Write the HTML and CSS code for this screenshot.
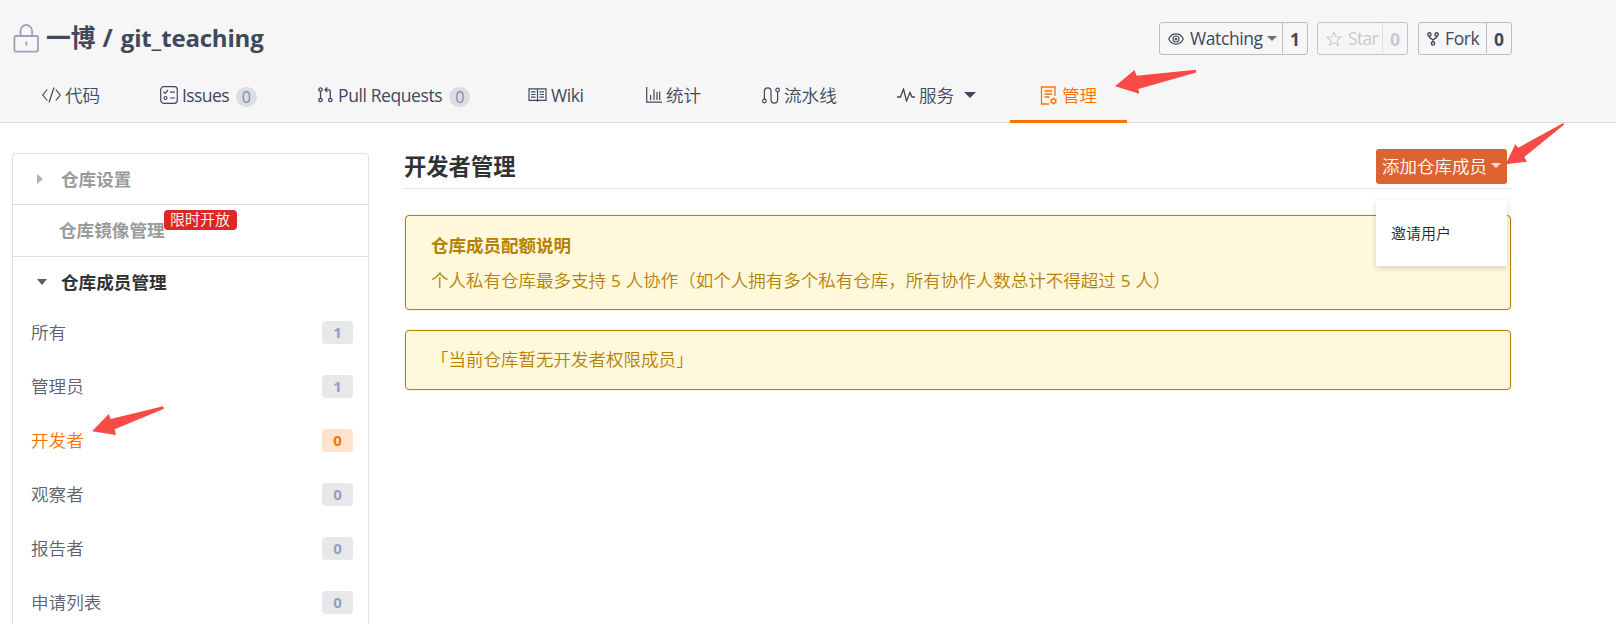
FILE: index.html
```html
<!DOCTYPE html>
<html lang="zh-CN">
<head>
<meta charset="utf-8">
<title>一博 / git_teaching</title>
<link rel="stylesheet" href="styles.css">
</head>
<body>
<header class="header">
  <div class="title-row">
    <svg class="lock" width="27" height="30" viewBox="0 0 27 30" fill="none" stroke="#9ba3b6" stroke-width="1.8"><rect x="1.4" y="13" width="23.6" height="15.6" rx="1.5"/><path d="M7.5 13V8a5.8 6 0 0 1 11.6 0v5M13.3 18.6v4"/></svg>
    <h1 class="repo"><span class="owner">一博</span><span class="slash">/</span><span class="name">git_teaching</span></h1>
    <div class="actions">
      <div class="action watch">
        <span class="act-main"><svg width="16" height="12" viewBox="0 0 16 12" fill="none" stroke="#40485b" stroke-width="1.1"><path d="M.7 6C4-.8 12-.8 15.3 6 12 12.8 4 12.8.7 6z"/><circle cx="8" cy="6" r="3"/><circle cx="8" cy="6" r=".8"/></svg><span class="act-label l-watch">Watching</span><i class="caret"></i></span><b class="act-count">1</b>
      </div>
      <div class="action star">
        <span class="act-main"><svg width="16" height="16" viewBox="0 0 16 16" fill="none" stroke="#c8cacd" stroke-width="1.1"><path d="M8 1.2l1.9 4.6 5 .4-3.8 3.2 1.2 4.9L8 11.600l-4.300 2.700 1.200-4.900L1.100 6.200l5-.4z"/></svg><span class="act-label l-star">Star</span></span><b class="act-count">0</b>
      </div>
      <div class="action fork">
        <span class="act-main"><svg width="12" height="14" viewBox="0 0 12 14" fill="none" stroke="#40485b" stroke-width="1.400"><circle cx="2.400" cy="2.400" r="1.600"/><circle cx="9.600" cy="2.400" r="1.600"/><circle cx="6" cy="11.400" r="1.600"/><path d="M2.400 4v1.400L6 8l3.600-2.600V4M6 8v1.800"/></svg><span class="act-label l-fork">Fork</span></span><b class="act-count">0</b>
      </div>
    </div>
  </div>
  <nav class="tabs">
    <a class="tab t-code"><svg width="19" height="16" viewBox="0 0 19 16" fill="none" stroke="#40485b" stroke-width="1.2"><path d="M5.200 2.500L.8 8l4.400 5.500M13.800 2.500L18.200 8l-4.400 5.500M12 .5L7 15.500"/></svg><span>代码</span></a>
    <a class="tab t-issues"><svg width="18" height="18" viewBox="0 0 18 18" fill="none" stroke="#40485b" stroke-width="1.2"><rect x=".7" y=".7" width="16.600" height="16.600" rx="3"/><path d="M3.500 5.800l1.700 1.500 2.800-3.300M10 6.200h4.800M10 12h4.800"/><circle cx="5.500" cy="12" r="1.500"/></svg><span class="latin l-issues">Issues</span><em class="pill">0</em></a>
    <a class="tab t-pr"><svg width="15" height="16" viewBox="0 0 15 16" fill="none" stroke="#40485b" stroke-width="1.300"><circle cx="2.500" cy="2.600" r="1.700"/><circle cx="2.500" cy="13" r="1.700"/><circle cx="12.300" cy="13" r="1.700"/><path d="M2.500 4.300v7M12.300 11.300V4.500q0-1.700-1.700-1.700H7M9.300.5L7 2.800l2.300 2.300"/></svg><span class="latin l-pr">Pull Requests</span><em class="pill">0</em></a>
    <a class="tab t-wiki"><svg width="19" height="14" viewBox="0 0 19 14" fill="none" stroke="#40485b" stroke-width="1.200"><path d="M1 .8h17v11.600H1zM9.500.8v13M3 3.800h4.500M3 6.500h4.500M3 9.200h4.500M11.500 3.800H16M11.500 6.500H16M11.500 9.200H16"/></svg><span class="latin l-wiki">Wiki</span></a>
    <a class="tab t-stat"><svg width="16" height="16" viewBox="0 0 16 16" fill="none" stroke="#40485b" stroke-width="1.200"><path d="M.7 0v15.200H16M4.600 13V8M8 13V2.500M11 13V5M13.700 13V4.500"/></svg><span>统计</span></a>
    <a class="tab t-pipe"><svg width="18" height="17" viewBox="0 0 18 17" fill="none" stroke="#40485b" stroke-width="1.200"><circle cx="2.400" cy="14" r="1.800"/><circle cx="15.600" cy="3" r="1.800"/><path d="M2.400 12.200V4.500a3.300 3.600 0 0 1 6.600 0v8a3.300 3.600 0 0 0 6.600 0V4.800"/></svg><span>流水线</span></a>
    <a class="tab t-serv"><svg width="18" height="14" viewBox="0 0 18 14" fill="none" stroke="#40485b" stroke-width="1.300"><path d="M0 9h3.500L6.500 1l3 12L13 4.500 15 9h3"/></svg><span>服务</span><i class="caret big"></i></a>
    <a class="tab t-admin active"><svg width="18" height="19" viewBox="0 0 18 19" fill="none" stroke="#fe7300" stroke-width="1.300"><path d="M9 18H1.500V1H15v9M4.500 5H12M4.500 8H12M4.500 11h5"/><circle cx="13.500" cy="15" r="2.200"/><path d="M13.500 11.500v1.300M13.500 17.200v1.300M10.500 13.200l1.100.7M15.400 16.100l1.100.7M10.500 16.800l1.100-.7M15.400 13.900l1.100-.7"/></svg><span>管理</span></a>
  </nav>
</header>

<div class="body">
  <aside class="sidebar">
    <div class="group g1"><i class="tri right"></i><b>仓库设置</b></div>
    <div class="group g2"><b>仓库镜像管理</b><span class="promo">限时开放</span></div>
    <div class="group g3"><i class="tri down"></i><b>仓库成员管理</b></div>
    <ul class="members">
      <li><span>所有</span><b>1</b></li>
      <li><span>管理员</span><b>1</b></li>
      <li class="current"><span>开发者</span><b>0</b></li>
      <li><span>观察者</span><b>0</b></li>
      <li><span>报告者</span><b>0</b></li>
      <li><span>申请列表</span><b>0</b></li>
    </ul>
  </aside>
  <main class="main">
    <div class="main-head">
      <h2>开发者管理</h2>
      <div class="add-wrap">
        <button class="add">添加仓库成员<i class="caret white"></i></button>
        <div class="menu">邀请用户</div>
      </div>
    </div>
    <section class="notice quota">
      <h3>仓库成员配额说明</h3>
      <p>个人私有仓库最多支持<span class="five">5</span>人协作（如个人拥有多个私有仓库，所有协作人数总计不得超过<span class="five">5</span>人）</p>
    </section>
    <section class="notice empty"><p>「当前仓库暂无开发者权限成员」</p></section>
  </main>
</div>

<svg class="arrows" width="1616" height="624" viewBox="0 0 1616 624" fill="#f84b46">
  <path d="M1115 86.300L1134.500 70l2.200 5.700 59-5.900.6 2.700L1138.300 89l1 4.700z"/>
  <path d="M1505.700 164.300l9.600-20 3 3.400 45-24.700.7 1.700-39.700 32.300 2.700 4.700z"/>
  <path d="M92 431.300L108.700 414l2 5 52.300-12.700 1 2.400-49.300 20.600 1.300 5.700z"/>
</svg>
</body>
</html>
```
FILE: styles.css
```css
* { box-sizing: border-box; }
body {
  margin: 0;
  height: 624px;
  overflow: hidden;
  background: #fff;
  color: #40485b;
  font: 350 17.600px/26px "Noto Sans CJK SC", sans-serif;
}
h1, h2, h3, p, ul { margin: 0; padding: 0; }
svg { flex: none; display: block; }

.header { height: 123px; background: #f6f6f6; border-bottom: 1px solid #dcddde; }
.title-row { display: flex; height: 67px; padding: 22px 104px 0 13px; align-items: flex-start; }
.lock { margin: 1px 0 0 0; }
.repo { display: flex; align-items: baseline; margin: -2px 0 0 6px; line-height: 32px; font-size: 24.800px; white-space: nowrap; }
.slash, .name { font-family: "Open Sans", sans-serif; }
.slash { margin: 0 8px 0 7px; }
.name { font-size: 24px; letter-spacing: -.2px; }

.actions { display: flex; margin-left: auto; }
.action { display: flex; height: 33px; border: 1px solid #b9bbc9; border-radius: 3px; font-family: "Open Sans", sans-serif; line-height: 33px; }
.act-main { display: flex; flex: 1; align-items: center; padding-left: 8px; }
.act-main svg { margin-right: 6px; }
.act-count { width: 25px; border-left: 1px solid #b9bbc9; text-align: center; font-size: 17.500px; margin-bottom: 1px; }
.watch { width: 149px; margin-right: 9px; }
.star { width: 91px; margin-right: 10px; border-color: #c0c2cd; color: #c8cacd; }
.star .act-count { border-color: #dfe0e4; }
.fork { width: 94px; }
.act-label { font-size: 17.500px; font-weight: 400; letter-spacing: -.4px; }
.l-star { letter-spacing: -.7px; }

.caret { display: inline-block; width: 0; height: 0; margin-left: 4px; border: 5px solid transparent; border-top-color: #687080; border-bottom: 0; }
.caret.big { margin-left: 10px; border-width: 6px 6px 0; border-top-color: #40485b; }
.caret.white { margin-left: 4px; border-top-color: #f8dfd4; }

.tabs { display: flex; height: 56px; padding-left: 12px; }
.tab { display: flex; flex: none; height: 56px; padding: 0 0 0 30px; align-items: center; white-space: nowrap; }
.tab svg { margin-right: 4px; }
.t-code { width: 118px; }
.t-issues { width: 158px; }
.t-pr { width: 210px; }
.t-pr svg { margin-right: 5px; }
.t-wiki { width: 118px; }
.t-stat { width: 116px; }
.t-pipe { width: 135px; }
.t-serv { width: 143px; }
.t-admin { width: 117px; }
.active { border-bottom: 3px solid #fe7300; color: #fe7300; padding-top: 3px; }
.latin { font-family: "Open Sans", sans-serif; font-size: 17.500px; font-weight: 400; letter-spacing: -.4px; }
.l-issues { letter-spacing: -.6px; }
.pill { display: block; width: 21px; height: 20px; margin: 3px 0 0 7px; border-radius: 10px; background: #dcdddf; color: #7a8cae; font: 16px/20px "Open Sans", sans-serif; text-align: center; }

.body { display: flex; height: 501px; }
.sidebar { width: 357px; height: 490px; flex: none; margin: 30px 35px 0 12px; border: 1px solid #dfe2e8; border-bottom: 0; border-radius: 4px 4px 0 0; }
.group { display: flex; height: 52px; align-items: center; border-bottom: 1px solid #dcddde; color: #9b9b9b; padding-left: 24px; }
.g1 { height: 51px; }
.g2 { padding: 0 0 2px 46px; }
.g3 { height: 49px; border: 0; color: #303336; }
.tri { width: 24px; flex: none; }
.tri::before { content: ""; display: block; width: 0; height: 0; border: 5px solid transparent; }
.right::before { border-left: 6px solid #b4b4b4; border-right: 0; }
.down::before { border-top: 6px solid #5d5d5d; border-bottom: 0; }
.promo { align-self: flex-start; width: 73px; height: 20px; margin: 5px 0 0 -1px; border-radius: 4px; background: #db2828; color: #fff; font-size: 15px; line-height: 18px; text-align: center; }
.members { list-style: none; }
.members li { display: flex; height: 54px; padding: 0 15px 2px 18px; align-items: center; justify-content: space-between; color: #5b6270; }
.members b { width: 31px; height: 23px; border-radius: 4px; background: #e8e8ea; color: #94a0c0; font: bold 15px/23px "Noto Sans", sans-serif; text-align: center; }
.members .current { color: #fe7300; }
.members .current b { background: #ffe3cc; color: #fe7300; }

.main { width: 1108px; }
.main-head { display: flex; height: 66px; padding: 26px 5px 0 0; justify-content: space-between; border-bottom: 1px solid #e2e3e4; }
h2 { color: #303336; font-size: 22.300px; line-height: 33px; }
.add-wrap { position: relative; width: 131px; }
.add { display: flex; width: 131px; height: 35px; padding: 0 0 2px 6px; align-items: center; border: 0; border-radius: 3px; background: #dc6432; color: #fff; font: 350 17.500px/33px "Noto Sans CJK SC", sans-serif; white-space: nowrap; }
.menu { position: absolute; top: 51px; left: 0; width: 131px; height: 66px; padding-left: 15px; background: #fff; box-shadow: 0 2px 6px rgba(34, 36, 38, .18); color: #25272a; font-size: 15px; line-height: 65px; }
.notice { margin: 0 1px; border: 1px solid #b58105; border-radius: 4px; background: #fff8db; box-shadow: 0 0 0 1px rgba(181, 129, 5, .08); color: #b58105; padding-left: 25px; white-space: nowrap; }
.quota { height: 95px; margin-top: 26px; padding-top: 16px; }
.quota h3 { font-size: 17.500px; line-height: 26px; }
.quota p { margin-top: 9px; font-size: 17.500px; line-height: 26px; }
.five { font-family: "Open Sans", sans-serif; font-weight: 400; margin: 0 5px; font-size: 17px; }
.empty { height: 60px; margin-top: 20px; }
.empty p { font-size: 17.500px; line-height: 56px; }
.arrows { position: absolute; top: 0; left: 0; pointer-events: none; }
```
